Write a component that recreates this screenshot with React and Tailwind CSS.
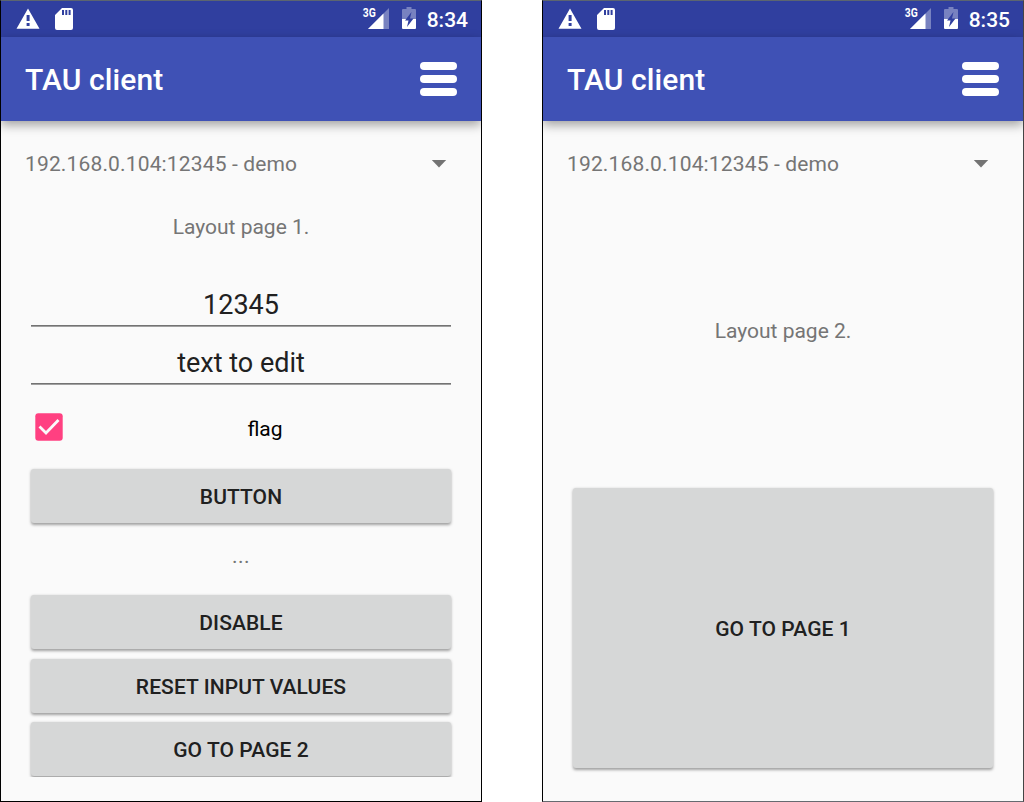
import React from "react";

function StatusBar({ time }) {
  return (
    <div className="flex h-9 shrink-0 items-center justify-between bg-[#303f9f]">
      <svg width="80" height="36" viewBox="1 1 80 36" fill="#fff">
        <path fillRule="evenodd" d="M28 8.5L39.5 28.8H16.5ZM26.6 15v6h3v-6zM26.6 23v3h3v-3z" />
        <path fillRule="evenodd" d="M62 8h9a2 2 0 0 1 2 2v18a2 2 0 0 1-2 2H57a2 2 0 0 1-2-2V15zM62 10v5h2v-5zM65.3 10v5h2v-5zM68.6 10v5h2v-5z" />
      </svg>
      <div className="flex h-9 items-center pr-[13px]">
        <svg width="65" height="36" viewBox="362 1 65 36" fill="#fff" className="overflow-visible">
          <path d="M389 8V29H368Z" opacity=".35" />
          <path d="M383.5 13.5V29H368Z" />
          <text x="362.8" y="17.4" fontSize="12" fontWeight="700" textLength="13" lengthAdjust="spacingAndGlyphs">3G</text>
          <path d="M406.500 7h5v2h3.500a1 1 0 0 1 1 1V19h-14V10a1 1 0 0 1 1-1h3.500z" opacity=".35" />
          <path d="M402 19h14v9a1 1 0 0 1-1 1h-12a1 1 0 0 1-1-1z" />
          <path d="M411.500 12L405 20.500h3.500L407 27L413.500 18.500H410z" fill="#303f9f" />
        </svg>
        <span className="pt-0.5 text-[21px] leading-9 font-medium text-white">{time}</span>
      </div>
    </div>
  );
}

function AppBar() {
  return (
    <div className="flex h-[84px] shrink-0 items-center justify-between bg-[#3f51b5] pr-6 pl-6 shadow-[0_4px_10px_rgba(0,0,0,0.36)]">
      <h1 className="pt-0.5 text-[30px] leading-[84px] font-medium tracking-[0.1px] text-white">TAU client</h1>
      <div className="flex flex-col gap-[4.500px]">
        <div className="h-[8.500px] w-[37px] rounded-full bg-white" />
        <div className="h-[8.500px] w-[37px] rounded-full bg-white" />
        <div className="h-[8.500px] w-[37px] rounded-full bg-white" />
      </div>
    </div>
  );
}

function Phone({ time, frame, children }) {
  return (
    <div className={"flex h-[802px] w-[482px] flex-col overflow-hidden border bg-[#fafafa] " + frame}>
      <StatusBar time={time} />
      <AppBar />
      <div className="flex h-[86px] shrink-0 items-center justify-between pr-[34px] pl-6 text-[21px] text-[#757575]">
        <span className="pt-0.5 tracking-[0.15px]">192.168.0.104:12345 - demo</span>
        <svg width="16" height="8" viewBox="0 0 16 8" fill="#737373">
          <path d="M.8 0h14.400L8 7.500z" />
        </svg>
      </div>
      {children}
    </div>
  );
}

function Button({ className = "", children }) {
  return (
    <button className={"flex w-[420px] shrink-0 items-center justify-center rounded-[3px] bg-[#d6d7d7] pt-[3px] text-[21px] font-medium tracking-[0.08px] text-[#202020] shadow-[0_1.500px_3px_rgba(0,0,0,0.36)] " + className}>
      {children}
    </button>
  );
}

function Field({ className = "", children }) {
  return (
    <div className={"flex w-[420px] shrink-0 flex-col items-center text-[27px] text-[#212121] " + className}>
      <span className="leading-10">{children}</span>
      <div className="h-px w-full bg-[#737373]" />
      <div className="h-px w-full bg-[#a0a0a0]" />
    </div>
  );
}

export default function App() {
  return (
    <div className="flex h-[802px] w-[1024px] justify-between bg-white font-['Roboto',sans-serif]">
      <Phone time="8:34" frame="border-black border-t-[#5c6570]">
        <div className="flex h-[570px] flex-col items-center overflow-hidden">
          <div className="h-10 shrink-0 text-[21px] leading-10 text-[#757575]">Layout page 1.</div>
          <Field className="mt-[38px]">12345</Field>
          <Field className="mt-4">text to edit</Field>
          <div className="mt-6 flex h-10 w-[420px] shrink-0 items-center">
            <svg width="28" height="28" viewBox="0 0 28 28" className="mb-1 ml-1 shrink-0">
              <rect x=".3" y=".3" width="27.400" height="27.400" rx="3" fill="#ff4081" />
              <path d="M4.500 13.500L11 20L23.500 7" fill="none" stroke="#fafafa" strokeWidth="2.800" />
            </svg>
            <span className="flex-1 pt-0.5 pl-4 text-center text-[21px] text-black">flag</span>
          </div>
          <Button className="mt-5 h-[54px]">BUTTON</Button>
          <div className="mt-[13px] h-10 shrink-0 text-[21px] leading-10 tracking-[0.500px] text-[#757575]">...</div>
          <Button className="mt-[19px] h-[54px]">DISABLE</Button>
          <Button className="mt-2.5 h-[54px]">RESET INPUT VALUES</Button>
          <Button className="mt-[9px] h-[54px]">GO TO PAGE 2</Button>
        </div>
      </Phone>
      <Phone time="8:35" frame="border-black border-t-[#5c6570] border-r-[#444444] border-b-[#666a70]">
        <div className="flex flex-col items-center">
          <div className="mt-[104px] h-10 text-[21px] leading-10 text-[#757575]">Layout page 2.</div>
          <Button className="mt-[137px] h-[280px]">GO TO PAGE 1</Button>
        </div>
      </Phone>
    </div>
  );
}
